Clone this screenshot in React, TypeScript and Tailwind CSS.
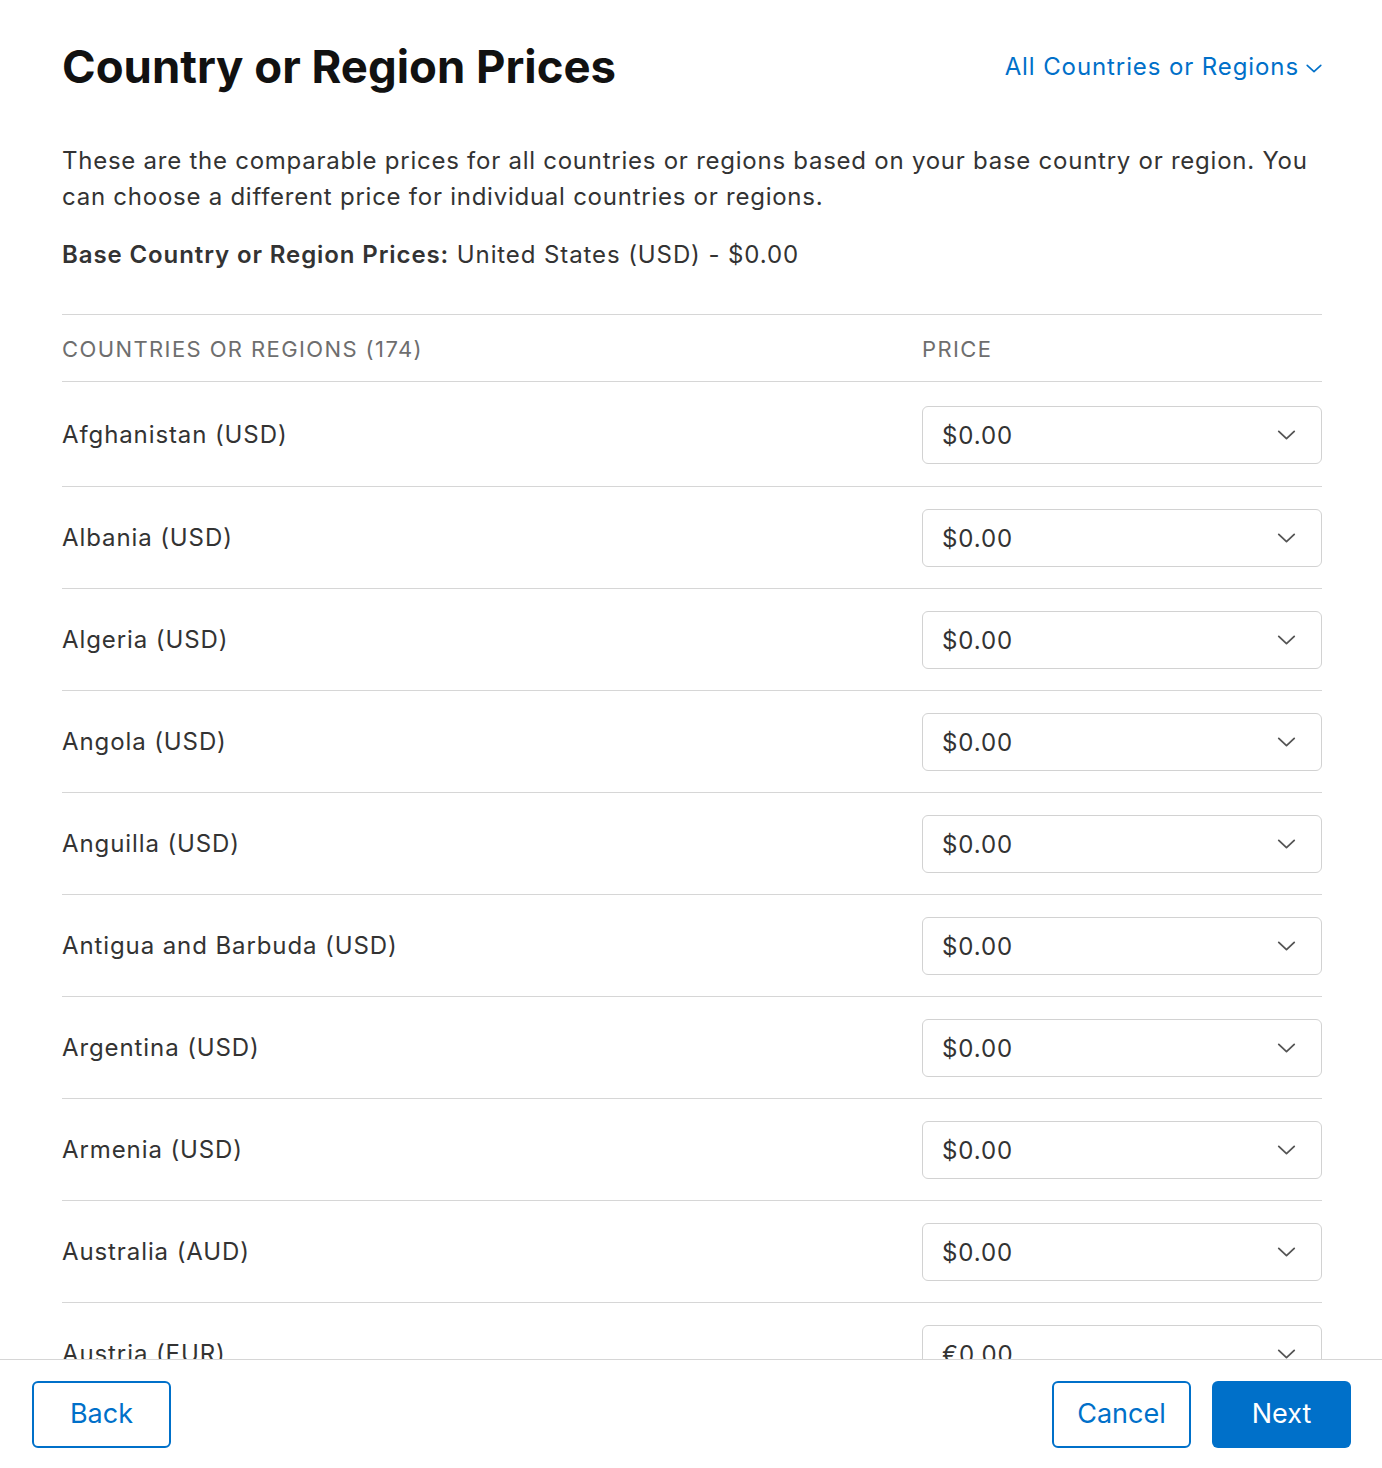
const rows = [
  { name: 'Afghanistan (USD)', price: '$0.00' },
  { name: 'Albania (USD)', price: '$0.00' },
  { name: 'Algeria (USD)', price: '$0.00' },
  { name: 'Angola (USD)', price: '$0.00' },
  { name: 'Anguilla (USD)', price: '$0.00' },
  { name: 'Antigua and Barbuda (USD)', price: '$0.00' },
  { name: 'Argentina (USD)', price: '$0.00' },
  { name: 'Armenia (USD)', price: '$0.00' },
  { name: 'Australia (AUD)', price: '$0.00' },
  { name: 'Austria (EUR)', price: '€0.00' },
  { name: 'Azerbaijan (USD)', price: '$0.00' },
]

function Chevron({ className }: { className?: string }) {
  return (
    <svg viewBox="0 0 20 11" className={className} fill="none" stroke="currentColor" strokeWidth={2} strokeLinecap="round" strokeLinejoin="round">
      <path d="M1.5 1.5 L10 9.5 L18.5 1.5" />
    </svg>
  )
}

export default function App() {
  return (
    <div className="h-[1468px] w-[1382px] flex flex-col bg-white text-[#1d1d1f] font-['Inter',sans-serif] overflow-hidden">
      {/* Scrollable content */}
      <div className="flex-1 overflow-hidden pl-[62px] pr-[60px] pt-[40px]">
        <div className="flex items-center justify-between">
          <h1 className="text-[45.5px] leading-[54px] font-bold text-[#111]">Country or Region Prices</h1>
          <button className="flex items-center gap-[7px] text-[24px] tracking-[0.9px] text-[#0070c9]">
            All Countries or Regions
            <Chevron className="w-[16px] h-[9px] mt-[2px]" />
          </button>
        </div>

        <p className="mt-[49px] text-[24px] leading-[36px] tracking-[0.75px] text-[#333]">
          These are the comparable prices for all countries or regions based on your base country or region. You can choose a different price for individual countries or regions.
        </p>
        <p className="mt-[22px] text-[24px] leading-[36px] tracking-[0.9px] text-[#333]">
          <span className="font-semibold">Base Country or Region Prices:</span> United States (USD) - $0.00
        </p>

        <div className="mt-[41px] border-t border-[#d6d6d6]">
          <div className="flex items-center h-[67px] pt-[3px] border-b border-[#d6d6d6] text-[22px] uppercase tracking-[1.4px] text-[#6e6e6e]">
            <div className="w-[860px]">Countries or Regions (174)</div>
            <div>Price</div>
          </div>
          {rows.map((r, i) => (
            <div
              key={r.name}
              className={`flex items-center border-b border-[#d6d6d6] ${i === 0 ? 'h-[105px] pt-[2px]' : 'h-[102px]'}`}
            >
              <div className="w-[860px] text-[24px] tracking-[0.9px] text-[#333]">{r.name}</div>
              <div className="flex-1 h-[58px] flex items-center justify-between pl-[19px] pr-[25px] border border-[#d2d2d2] rounded-[6px]">
                <span className="text-[24px] tracking-[0.9px] text-[#333] pt-[2px]">{r.price}</span>
                <Chevron className="w-[19px] h-[10px] text-[#555]" />
              </div>
            </div>
          ))}
        </div>
      </div>

      {/* Footer */}
      <div className="h-[109px] shrink-0 border-t border-[#d6d6d6] bg-white flex items-center justify-between pl-[32px] pr-[31px] pb-[20px] pt-[21px]">
        <button className="w-[139px] h-[67px] rounded-[6px] border-2 border-[#0070c9] text-[#0070c9] text-[27px]">
          Back
        </button>
        <div className="flex gap-[21px]">
          <button className="w-[139px] h-[67px] rounded-[6px] border-2 border-[#0070c9] text-[#0070c9] text-[27px]">
            Cancel
          </button>
          <button className="w-[139px] h-[67px] rounded-[6px] bg-[#0070c9] text-white text-[27px]">
            Next
          </button>
        </div>
      </div>
    </div>
  )
}
